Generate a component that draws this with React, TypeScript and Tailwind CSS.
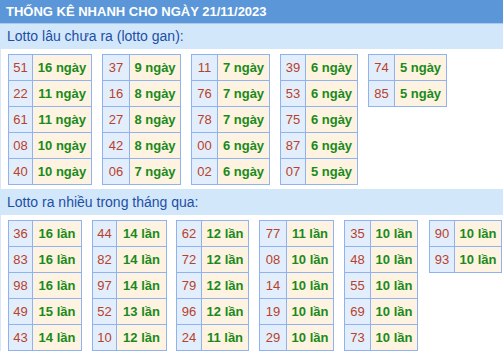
import React from "react";

type Tbl = { cols: string; ml: string; rows: [string, string][] };

const gan: Tbl[] = [
  { cols: "grid-cols-[23px_58px]", ml: "ml-0", rows: [["51", "16"], ["22", "11"], ["61", "11"], ["08", "10"], ["40", "10"]] },
  { cols: "grid-cols-[26px_50px]", ml: "ml-[10px]", rows: [["37", "9"], ["16", "8"], ["27", "8"], ["42", "8"], ["06", "7"]] },
  { cols: "grid-cols-[25px_51px]", ml: "ml-[10px]", rows: [["11", "7"], ["76", "7"], ["78", "7"], ["00", "6"], ["02", "6"]] },
  { cols: "grid-cols-[24px_51px]", ml: "ml-[10px]", rows: [["39", "6"], ["53", "6"], ["75", "6"], ["87", "6"], ["07", "5"]] },
  { cols: "grid-cols-[25px_51px]", ml: "ml-[10px]", rows: [["74", "5"], ["85", "5"]] },
];

const nhieu: Tbl[] = [
  { cols: "grid-cols-[23px_48px]", ml: "ml-0", rows: [["36", "16"], ["83", "16"], ["98", "16"], ["49", "15"], ["43", "14"]] },
  { cols: "grid-cols-[23px_49px]", ml: "ml-[10px]", rows: [["44", "14"], ["82", "14"], ["97", "14"], ["52", "13"], ["10", "12"]] },
  { cols: "grid-cols-[24px_46px]", ml: "ml-[9px]", rows: [["62", "12"], ["72", "12"], ["79", "12"], ["96", "12"], ["24", "11"]] },
  { cols: "grid-cols-[26px_46px]", ml: "ml-[10px]", rows: [["77", "11"], ["08", "10"], ["14", "10"], ["19", "10"], ["29", "10"]] },
  { cols: "grid-cols-[25px_46px]", ml: "ml-[10px]", rows: [["35", "10"], ["48", "10"], ["55", "10"], ["69", "10"], ["73", "10"]] },
  { cols: "grid-cols-[24px_46px]", ml: "ml-[11px]", rows: [["90", "10"], ["93", "10"]] },
];

function Table({ t, unit }: { t: Tbl; unit: string }) {
  return (
    <div className={`grid ${t.cols} ${t.ml} auto-rows-[25px] gap-px p-px bg-[#8fb3f0] shrink-0`}>
      {t.rows.map(([n, c], i) => (
        <React.Fragment key={i}>
          <div className="flex items-center justify-center bg-[#e3eefc] text-[13px] text-[#b8412a]">{n}</div>
          <div className="flex items-center justify-center bg-[#fef3e1] text-[13px] font-bold text-[#1a8a1a]">
            {c} {unit}
          </div>
        </React.Fragment>
      ))}
    </div>
  );
}

export default function App() {
  return (
    <div className="w-[503px] h-[351px] overflow-hidden bg-white" style={{ fontFamily: '"Liberation Sans", Arial, sans-serif' }}>
      <div className="h-[23px] bg-[#5b97d8] pl-[6px] pt-[1px] flex items-center text-[13px] font-bold text-white whitespace-nowrap">
        THỐNG KÊ NHANH CHO NGÀY 21/11/2023
      </div>
      <div className="h-[26px] border-t border-[#a9c9ef] bg-[#d3e7fb] pl-[7px] flex items-center text-[14px] text-[#1d4fa5] whitespace-nowrap">
        Lotto lâu chưa ra (lotto gan):
      </div>
      <div className="border-l border-[#d9e6f6] pl-[7px] pt-[5px] pb-[4px] flex items-start">
        {gan.map((t, i) => (
          <Table key={i} t={t} unit="ngày" />
        ))}
      </div>
      <div className="h-[26px] bg-[#d3e7fb] pl-[7px] flex items-center text-[14px] text-[#1d4fa5] whitespace-nowrap">
        Lotto ra nhiều trong tháng qua:
      </div>
      <div className="border-l border-[#d9e6f6] pl-[7px] pt-[5px] flex items-start">
        {nhieu.map((t, i) => (
          <Table key={i} t={t} unit="lần" />
        ))}
      </div>
    </div>
  );
}
